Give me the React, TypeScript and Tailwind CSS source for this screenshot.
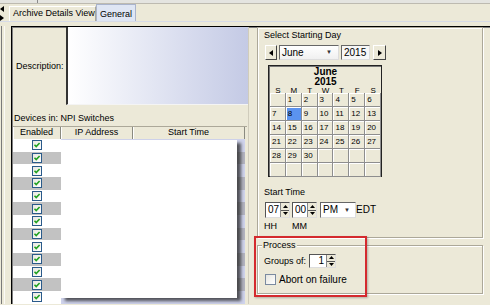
import React from "react";

const rowsCal: (number | "")[][] = [
  ["", 1, 2, 3, 4, 5, 6],
  [7, 8, 9, 10, 11, 12, 13],
  [14, 15, 16, 17, 18, 19, 20],
  [21, 22, 23, 24, 25, 26, 27],
  [28, 29, 30, "", "", "", ""],
  ["", "", "", "", "", "", ""],
];

function Check() {
  return (
    <div className="w-[10px] h-[10px] border border-[#2a5a8a] bg-gradient-to-br from-[#e8e8e0] to-white flex items-center justify-center">
      <svg width="8" height="8" viewBox="0 0 8 8">
        <path d="M1.5 3.8 L3.2 5.6 L6.6 2" stroke="#21a121" strokeWidth="1.6" fill="none" />
      </svg>
    </div>
  );
}

function Tri({ dir }: { dir: "l" | "r" | "u" | "d" }) {
  const d =
    dir === "l" ? "M4 0 L0 3 L4 6 Z" : dir === "r" ? "M0 0 L4 3 L0 6 Z" : dir === "u" ? "M0 3 L2.5 0 L5 3 Z" : "M0 0 L2.5 3 L5 0 Z";
  const w = dir === "l" || dir === "r" ? 4 : 5;
  const h = dir === "l" || dir === "r" ? 6 : 3;
  return (
    <svg width={w} height={h} viewBox={`0 0 ${w} ${h}`}>
      <path d={d} fill="#000" />
    </svg>
  );
}

function Spinner({ value, w }: { value: string; w: string }) {
  return (
    <div className={`${w} h-[16px] flex border border-[#555] border-r-[#ddd] border-b-[#ddd] bg-white`}>
      <div className="flex-1 flex items-center pl-[2px] text-[10px] leading-none">{value}</div>
      <div className="w-[9px] flex flex-col bg-[#ece9d8] border-l border-[#888]">
        <div className="flex-1 flex items-center justify-center border-b border-[#555]">
          <Tri dir="u" />
        </div>
        <div className="flex-1 flex items-center justify-center">
          <Tri dir="d" />
        </div>
      </div>
    </div>
  );
}

export default function App() {
  const tableRows = Array.from({ length: 13 }, (_, i) => i);
  return (
    <div className="relative w-[490px] h-[305px] overflow-hidden bg-[#ece9d8] text-black text-[9px] font-['Liberation_Sans',Arial,sans-serif]">
      {/* top strip */}
      <div className="h-[4px] bg-[#e4e4e0] border-b border-[#bdbab0] flex">
        <div className="ml-[37px] w-px h-full bg-[#8a8a8a]" />
      </div>
      {/* tab strip */}
      <div className="flex h-[17px] items-end">
        <div className="w-[4px] h-full flex flex-col justify-center gap-[3px] pt-[2px]">
          <Tri dir="l" />
          <Tri dir="r" />
        </div>
        <div className="w-[5px]" />
        <div className="w-[87px] h-[15px] flex items-center pl-[3px] border-t border-l border-white border-r border-r-[#aca899] bg-[#ece9d8] whitespace-nowrap">
          Archive Details View
        </div>
        <div className="w-[40px] h-[17px] flex items-start pt-[3px] justify-center bg-[#dfe6f4] border border-b-0 border-[#aab4cc] whitespace-nowrap">
          General
        </div>
      </div>
      <div className="h-px bg-[#f8f9fc] border-b border-[#d6dbe8]" />
      <div className="h-[4px]" />
      {/* main */}
      <div className="flex h-[278px]">
        <div className="w-[11px] flex">
          <div className="ml-[1px] w-px h-full bg-[#7a7a7a]" />
          <div className="ml-[2px] w-px h-full bg-[#fbfaf6]" />
        </div>
        <div className="flex-1 flex border-t border-l border-black shadow-[inset_1px_1px_0_#808080]">
          {/* left column */}
          <div className="w-[237px] flex flex-col border-r border-[#d0ccbc]">
            <div className="h-[78px] flex">
              <div className="w-[54px] flex items-center pl-[4px] pt-[2px]">Description:</div>
              <div className="w-[182px] border-l-2 border-[#333] border-b border-b-[#f4f4f4] bg-gradient-to-r from-white to-[#c4cae5]" />
            </div>
            <div className="h-[21px] flex items-end pl-[2px] pb-[2px] leading-[11px] whitespace-nowrap">
              Devices in: NPI Switches
            </div>
            <div className="relative ml-[1px] w-[234px] flex-1 overflow-hidden">
              <div className="h-[13px] flex border-t border-[#aca899] bg-[#ece9d8]">
                <div className="w-[48px] flex items-center justify-center border-r border-[#8a8a80] shadow-[inset_1px_0_0_#fff]">Enabled</div>
                <div className="w-[72px] flex items-center justify-center border-r border-[#8a8a80] shadow-[inset_1px_0_0_#fff]">IP Address</div>
                <div className="w-[112px] flex items-center justify-center border-r border-[#8a8a80] shadow-[inset_1px_0_0_#fff]">Start Time</div>
              </div>
              {tableRows.map((i) => (
                <div key={i} className="h-[12.67px] flex">
                  <div className={`w-[48px] flex items-center justify-center ${i % 2 ? "bg-[#c2c2c2]" : "bg-white"}`}>
                    <Check />
                  </div>
                  <div className={`w-[184px] ${i % 2 ? "bg-[#b3b4c0]" : "bg-[#cfd3ec]"}`} />
                </div>
              ))}
              {/* empty popup overlay */}
              <div className="absolute left-[48px] top-[14px] w-[176px] h-[158px] bg-white shadow-[4px_3px_3px_rgba(40,40,40,0.75)]" />
            </div>
          </div>
          {/* right column */}
          <div className="flex-1 pl-[8px] flex flex-col">
            <div className="w-[226px] h-[211px] border border-[#aca899] shadow-[1px_1px_0_#fff,inset_1px_1px_0_#fff] pl-[6px] flex flex-col">
              <div className="pt-[1px] leading-[12px] whitespace-nowrap">Select Starting Day</div>
              <div className="mt-[4px] h-[15px] flex pl-[1px]">
                <div className="w-[12px] h-[15px] flex items-center justify-center border border-white border-r-[#444] border-b-[#444] bg-[#ece9d8]">
                  <Tri dir="l" />
                </div>
                <div className="ml-[2px] w-[60px] h-[15px] flex items-center border border-[#666] border-r-[#ddd] border-b-[#ddd] bg-gradient-to-b from-white to-[#f0f0f0]">
                  <span className="pl-[2px] flex-1 text-[10px] leading-none">June</span>
                  <span className="pr-[6px] text-[6px] text-[#333]">▼</span>
                </div>
                <div className="ml-[2px] w-[29px] h-[15px] flex items-center border border-[#666] border-r-[#ddd] border-b-[#ddd] bg-[#f7f7f7] pl-[2px] text-[10px] leading-none">
                  2015
                </div>
                <div className="ml-[3px] w-[13px] h-[15px] flex items-center justify-center border border-white border-r-[#444] border-b-[#444] bg-[#ece9d8]">
                  <Tri dir="r" />
                </div>
              </div>
              <div className="mt-[5px] ml-[4px] w-[114px] h-[112px] border border-[#222] shadow-[inset_1px_1px_0_#777] flex flex-col pl-px">
                <div className="h-[27px] flex flex-col items-center pt-[1px]">
                  <div className="font-bold text-[10px] leading-[10px]">June</div>
                  <div className="font-bold text-[10px] leading-[10px]">2015</div>
                  <div className="flex w-full text-[8px] leading-[7px]">
                    {["S", "M", "T", "W", "T", "F", "S"].map((d, i) => (
                      <div key={i} className="w-[16px] text-center">{d}</div>
                    ))}
                  </div>
                </div>
                {rowsCal.map((r, ri) => (
                  <div key={ri} className="h-[14px] flex">
                    {r.map((c, ci) => (
                      <div
                        key={ci}
                        className={`w-[16px] h-[14px] flex items-center pl-[2px] text-[8px] border-r border-b border-[#8e8e8e] shadow-[inset_1px_1px_0_#fff] ${
                          c === 8 ? "bg-[#5b93ef]" : "bg-[#ece9d8]"
                        }`}
                      >
                        {c}
                      </div>
                    ))}
                  </div>
                ))}
              </div>
              <div className="mt-[10px] leading-[10px]">Start Time</div>
              <div className="mt-[5px] flex items-center pl-[1px]">
                <Spinner value="07" w="w-[25px]" />
                <div className="ml-[2px]">
                  <Spinner value="00" w="w-[25px]" />
                </div>
                <div className="ml-[3px] w-[36px] h-[16px] flex items-center border border-[#666] border-r-[#ddd] border-b-[#ddd] bg-white">
                  <span className="pl-[2px] flex-1 text-[10px] leading-none">PM</span>
                  <span className="pr-[5px] text-[6px] text-[#333]">▼</span>
                </div>
                <span className="text-[10px] leading-none">EDT</span>
              </div>
              <div className="mt-[3px] flex leading-[10px]">
                <span className="w-[28px]">HH</span>
                <span>MM</span>
              </div>
            </div>
            <div className="mt-[7px] w-[226px] h-[49px] border border-[#aca899] shadow-[1px_1px_0_#fff,inset_1px_1px_0_#fff] flex flex-col pl-[4px]">
              <div className="-mt-[6px] self-start bg-[#ece9d8] px-px leading-[10px]">Process</div>
              <div className="mt-[4px] flex items-center pl-[2px]">
                <span className="w-[45px] leading-[10px]">Groups of:</span>
                <div className="w-[27px] h-[14px] flex border border-[#555] border-r-[#ddd] border-b-[#ddd] bg-white">
                  <div className="flex-1 flex items-center justify-end pr-[2px] text-[10px] leading-none">1</div>
                  <div className="w-[9px] flex flex-col bg-[#ece9d8] border-l border-[#888]">
                    <div className="flex-1 flex items-center justify-center border-b border-[#555]">
                      <Tri dir="u" />
                    </div>
                    <div className="flex-1 flex items-center justify-center">
                      <Tri dir="d" />
                    </div>
                  </div>
                </div>
              </div>
              <div className="mt-[6px] flex items-center pl-[3px]">
                <div className="w-[11px] h-[11px] border border-[#7a8aa0] bg-gradient-to-br from-[#e6e6e0] to-white" />
                <span className="ml-[3px] text-[10px] leading-none">Abort on failure</span>
              </div>
            </div>
          </div>
        </div>
      </div>
      {/* red annotation */}
      <div className="absolute left-[254px] top-[236px] w-[113px] h-[61px] border-2 border-[#d42a2e] shadow-[1px_1px_2px_rgba(0,0,0,0.25)]" />
    </div>
  );
}
